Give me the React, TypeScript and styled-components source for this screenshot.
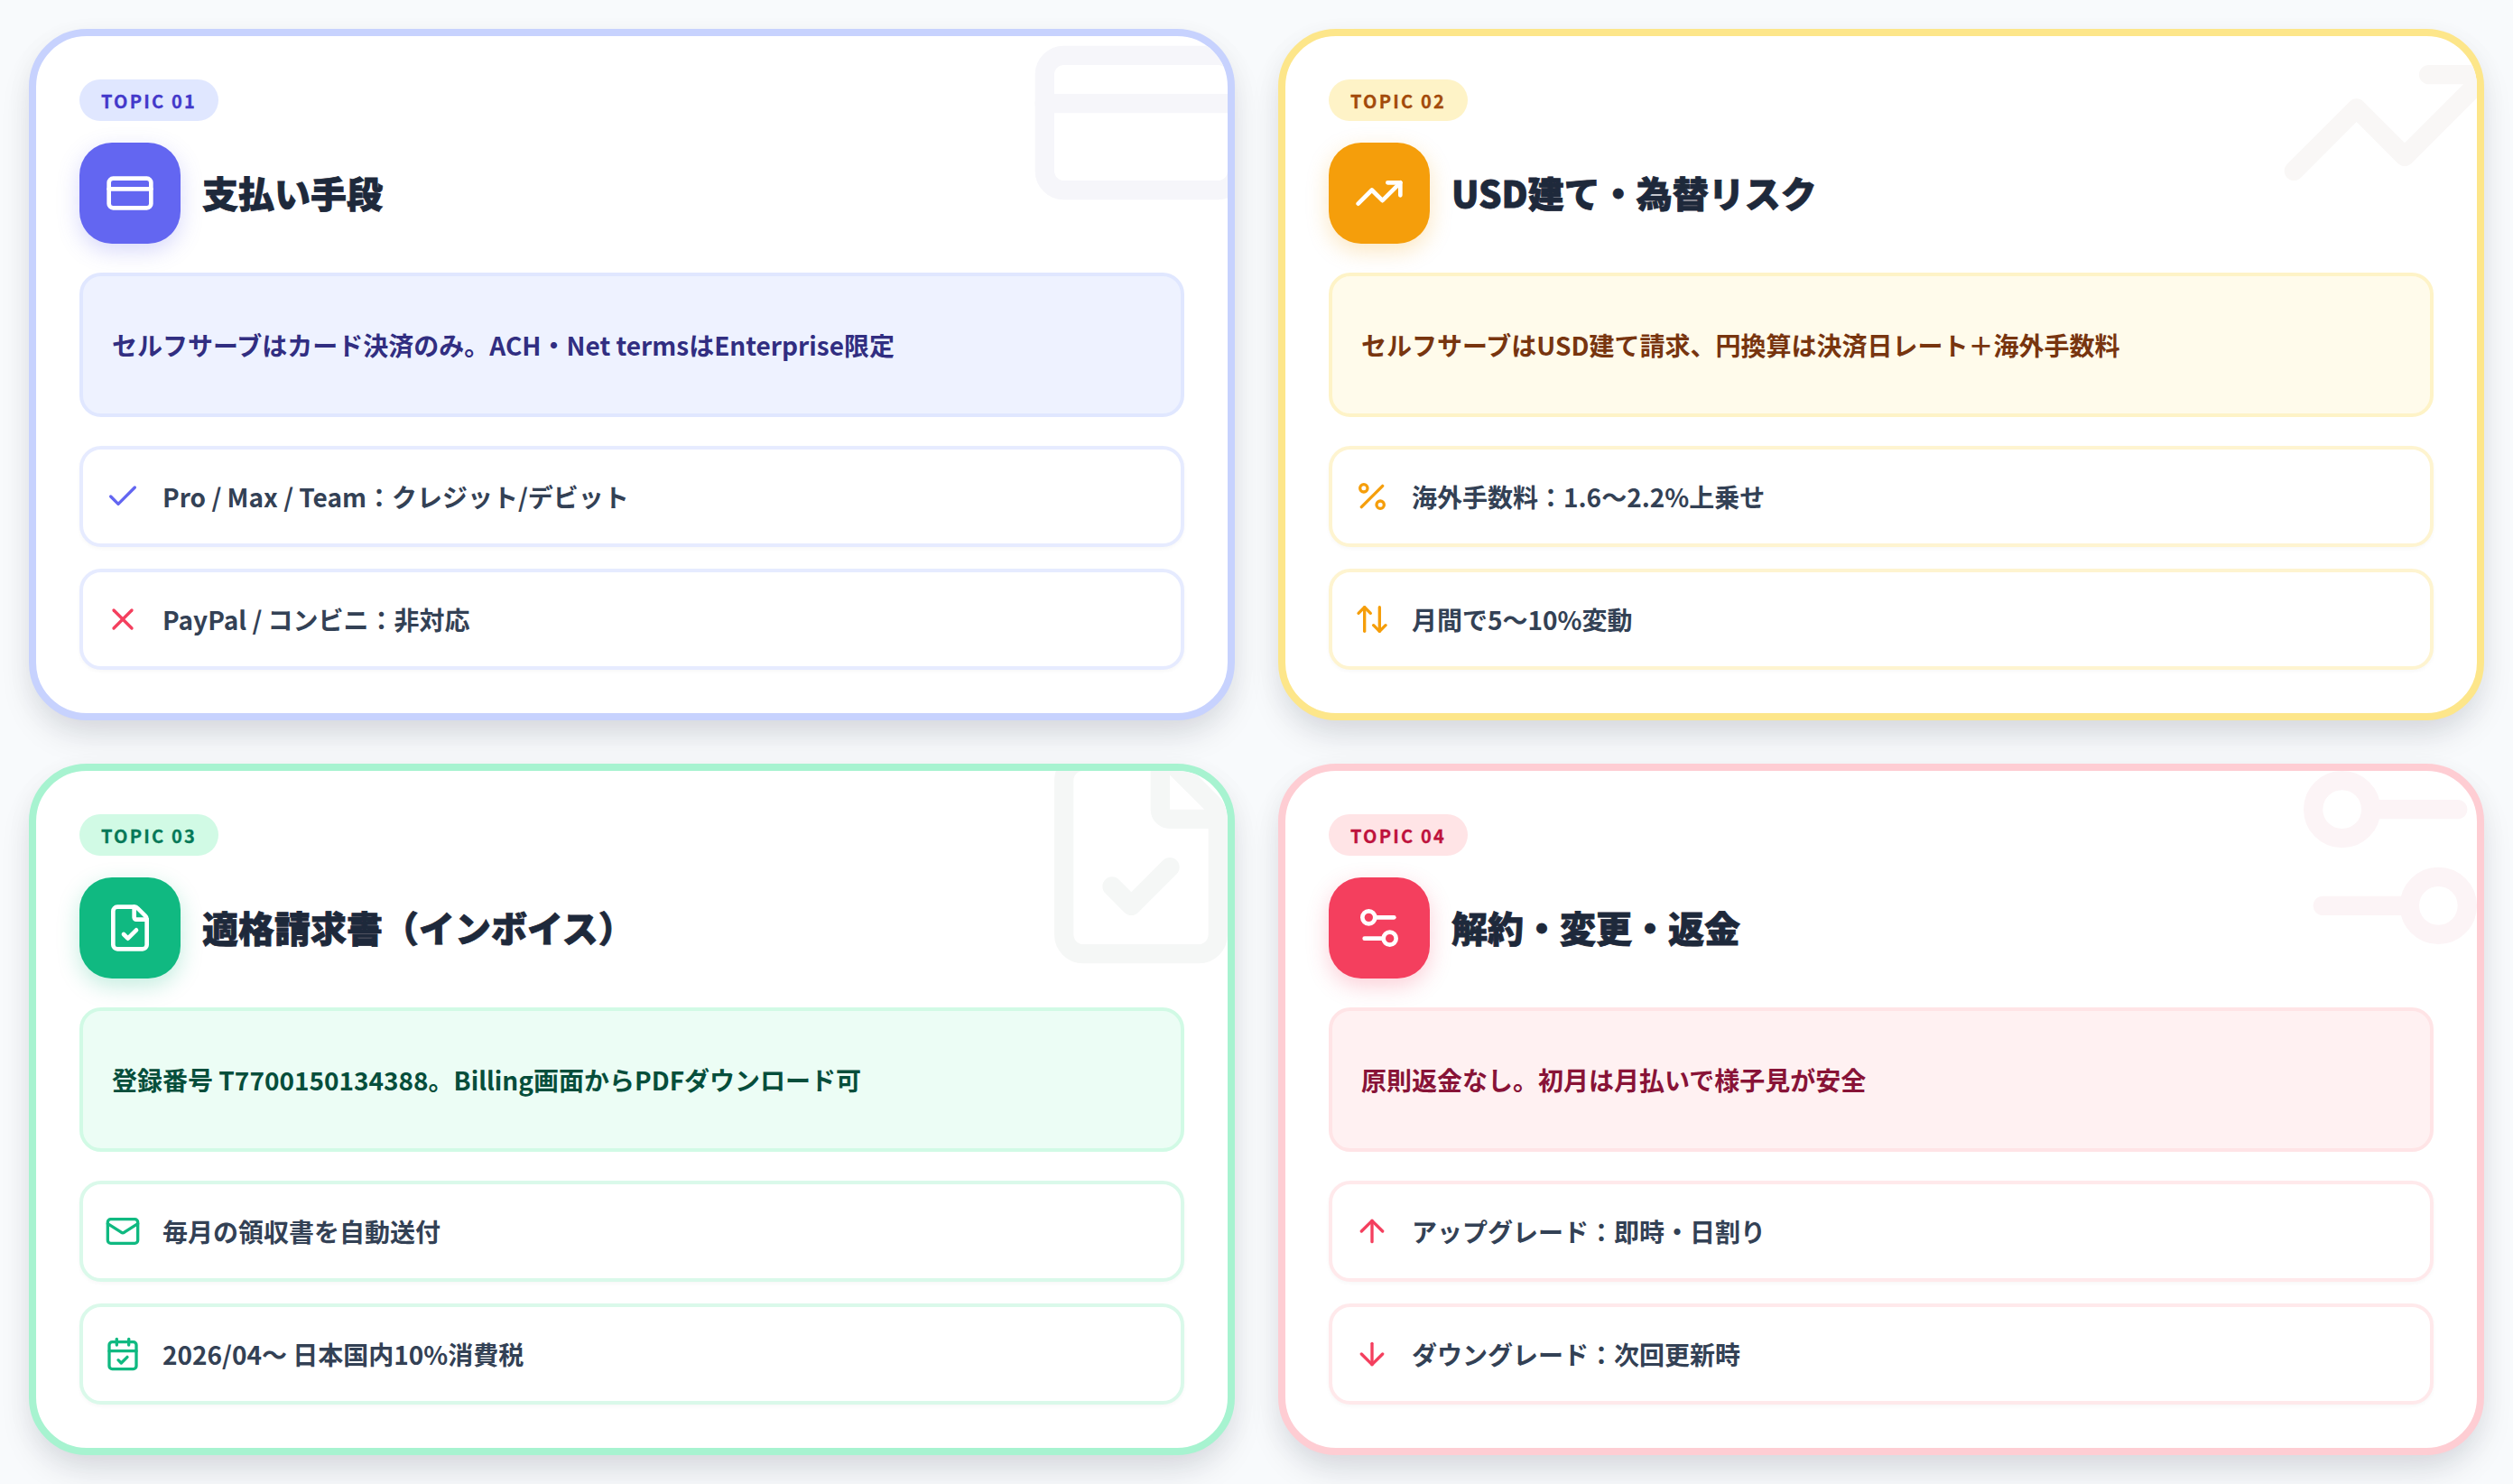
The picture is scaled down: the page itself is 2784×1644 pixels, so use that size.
import React from "react";
import styled, { createGlobalStyle } from "styled-components";
import {
  ArrowDown,
  ArrowUp,
  ArrowUpDown,
  CalendarCheck,
  Check,
  CreditCard,
  FileCheck,
  Mail,
  Percent,
  Settings2,
  TrendingUp,
  X,
  type LucideIcon,
} from "lucide-react";

type Tone = {
  border: string;
  badgeBg: string;
  badgeText: string;
  accent: string;
  iconShadow: string;
  calloutBg: string;
  soft: string;
  rowBorder: string;
  calloutText: string;
  ghost: string;
};

const tones: Record<string, Tone> = {
  indigo: {
    border: "#c7d2fe",
    badgeBg: "#e0e7ff",
    badgeText: "#4338ca",
    accent: "#6366f1",
    iconShadow: "rgba(99,102,241,0.25)",
    calloutBg: "#eef2ff",
    soft: "#e0e7ff",
    rowBorder: "#e6ebff",
    calloutText: "#312e81",
    ghost: "#f6f6fa",
  },
  amber: {
    border: "#fde68a",
    badgeBg: "#fef3c7",
    badgeText: "#a34a0a",
    accent: "#f59e0b",
    iconShadow: "rgba(245,158,11,0.25)",
    calloutBg: "#fffbeb",
    soft: "#fef3c7",
    rowBorder: "#fef4d0",
    calloutText: "#78350f",
    ghost: "#f9f7f6",
  },
  emerald: {
    border: "#a7f3d0",
    badgeBg: "#d1fae5",
    badgeText: "#047857",
    accent: "#10b981",
    iconShadow: "rgba(16,185,129,0.25)",
    calloutBg: "#ecfdf5",
    soft: "#d1fae5",
    rowBorder: "#daf9ea",
    calloutText: "#064e3b",
    ghost: "#f5f7f6",
  },
  rose: {
    border: "#fecdd3",
    badgeBg: "#ffe4e6",
    badgeText: "#be123c",
    accent: "#f43f5e",
    iconShadow: "rgba(244,63,94,0.25)",
    calloutBg: "#fff1f2",
    soft: "#ffe4e6",
    rowBorder: "#ffe9eb",
    calloutText: "#881337",
    ghost: "#fcf4f6",
  },
};

const GlobalStyle = createGlobalStyle`
  * { box-sizing: border-box; }
  html, body { margin: 0; padding: 0; background: #f8fafc; }
  body {
    font-family: "Noto Sans CJK JP", "Noto Sans", sans-serif;
  }
`;

const Page = styled.main`
  display: grid;
  grid-template-columns: 1fr 1fr;
  gap: 48px;
  width: 2784px;
  height: 1644px;
  padding: 32px;
  background: #f8fafc;
`;

const Card = styled.section<{ $tone: Tone }>`
  position: relative;
  overflow: hidden;
  display: flex;
  flex-direction: column;
  align-items: stretch;
  height: 766px;
  padding: 48px;
  background: #ffffff;
  border: 8px solid ${(p) => p.$tone.border};
  border-radius: 64px;
  box-shadow: 0 20px 40px -8px rgba(15, 23, 42, 0.14), 0 8px 32px rgba(15, 23, 42, 0.04);
`;

const Ghost = styled.div<{ $tone: Tone }>`
  position: absolute;
  top: -32px;
  right: -32px;
  width: 256px;
  height: 256px;
  color: ${(p) => p.$tone.ghost};
`;

const Badge = styled.span<{ $tone: Tone }>`
  align-self: flex-start;
  display: inline-flex;
  align-items: center;
  height: 46px;
  padding: 0 24px;
  margin-bottom: 24px;
  border-radius: 23px;
  background: ${(p) => p.$tone.badgeBg};
  color: ${(p) => p.$tone.badgeText};
  font-size: 20px;
  font-weight: 700;
  letter-spacing: 2.2px;
  -webkit-text-stroke: 0.3px ${(p) => p.$tone.badgeText};
`;

const Header = styled.header`
  display: flex;
  align-items: center;
  gap: 24px;
  margin-bottom: 32px;
`;

const IconTile = styled.div<{ $tone: Tone }>`
  display: flex;
  align-items: center;
  justify-content: center;
  flex: none;
  width: 112px;
  height: 112px;
  border-radius: 36px;
  background: ${(p) => p.$tone.accent};
  color: #ffffff;
  box-shadow: 0 8px 24px ${(p) => p.$tone.iconShadow};
`;

const Title = styled.h2`
  margin: 0 0 2px;
  color: #1e293b;
  font-size: 40px;
  font-weight: 900;
  line-height: 1.2;
  -webkit-text-stroke: 0.8px #1e293b;
`;

const Callout = styled.p<{ $tone: Tone }>`
  display: flex;
  align-items: center;
  height: 160px;
  margin: 0 0 32px;
  padding: 0 32px;
  border: 4px solid ${(p) => p.$tone.soft};
  border-radius: 24px;
  background: ${(p) => p.$tone.calloutBg};
  color: ${(p) => p.$tone.calloutText};
  font-size: 28px;
  font-weight: 700;
`;

const List = styled.ul`
  display: flex;
  flex-direction: column;
  gap: 24px;
  margin: 0;
  padding: 0;
  list-style: none;
`;

const Row = styled.li<{ $tone: Tone }>`
  display: flex;
  align-items: center;
  gap: 24px;
  height: 112px;
  padding: 0 24px;
  border: 4px solid ${(p) => p.$tone.rowBorder};
  border-radius: 24px;
  background: #ffffff;
  box-shadow: 0 2px 4px rgba(15, 23, 42, 0.03);
  color: #334155;
  font-size: 28px;
  font-weight: 700;
`;

const RowIcon = styled.span<{ $color: string }>`
  display: flex;
  flex: none;
  width: 40px;
  height: 40px;
  color: ${(p) => p.$color};
`;

type Item = { icon: LucideIcon; color?: string; text: string };
type Topic = {
  no: string;
  tone: Tone;
  icon: LucideIcon;
  title: string;
  callout: string;
  items: Item[];
};

const topics: Topic[] = [
  {
    no: "TOPIC 01",
    tone: tones.indigo,
    icon: CreditCard,
    title: "支払い手段",
    callout: "セルフサーブはカード決済のみ。ACH・Net termsはEnterprise限定",
    items: [
      { icon: Check, text: "Pro / Max / Team\uFF1Aクレジット/デビット" },
      { icon: X, color: "#f43f5e", text: "PayPal / コンビニ\uFF1A非対応" },
    ],
  },
  {
    no: "TOPIC 02",
    tone: tones.amber,
    icon: TrendingUp,
    title: "USD建て・為替リスク",
    callout: "セルフサーブはUSD建て請求、円換算は決済日レート\uFF0B海外手数料",
    items: [
      { icon: Percent, text: "海外手数料\uFF1A1.6〜2.2%上乗せ" },
      { icon: ArrowUpDown, text: "月間で5〜10%変動" },
    ],
  },
  {
    no: "TOPIC 03",
    tone: tones.emerald,
    icon: FileCheck,
    title: "適格請求書\uFF08インボイス\uFF09",
    callout: "登録番号 T7700150134388。Billing画面からPDFダウンロード可",
    items: [
      { icon: Mail, text: "毎月の領収書を自動送付" },
      { icon: CalendarCheck, text: "2026/04〜 日本国内10%消費税" },
    ],
  },
  {
    no: "TOPIC 04",
    tone: tones.rose,
    icon: Settings2,
    title: "解約・変更・返金",
    callout: "原則返金なし。初月は月払いで様子見が安全",
    items: [
      { icon: ArrowUp, text: "アップグレード\uFF1A即時・日割り" },
      { icon: ArrowDown, text: "ダウングレード\uFF1A次回更新時" },
    ],
  },
];

export default function App() {
  return (
    <>
      <GlobalStyle />
      <Page>
        {topics.map((t) => (
          <Card key={t.no} $tone={t.tone}>
            <Ghost $tone={t.tone}>
              <t.icon size={256} />
            </Ghost>
            <Badge $tone={t.tone}>{t.no}</Badge>
            <Header>
              <IconTile $tone={t.tone}>
                <t.icon size={56} />
              </IconTile>
              <Title>{t.title}</Title>
            </Header>
            <Callout $tone={t.tone}>{t.callout}</Callout>
            <List>
              {t.items.map((item) => (
                <Row key={item.text} $tone={t.tone}>
                  <RowIcon $color={item.color ?? t.tone.accent}>
                    <item.icon size={40} />
                  </RowIcon>
                  {item.text}
                </Row>
              ))}
            </List>
          </Card>
        ))}
      </Page>
    </>
  );
}
